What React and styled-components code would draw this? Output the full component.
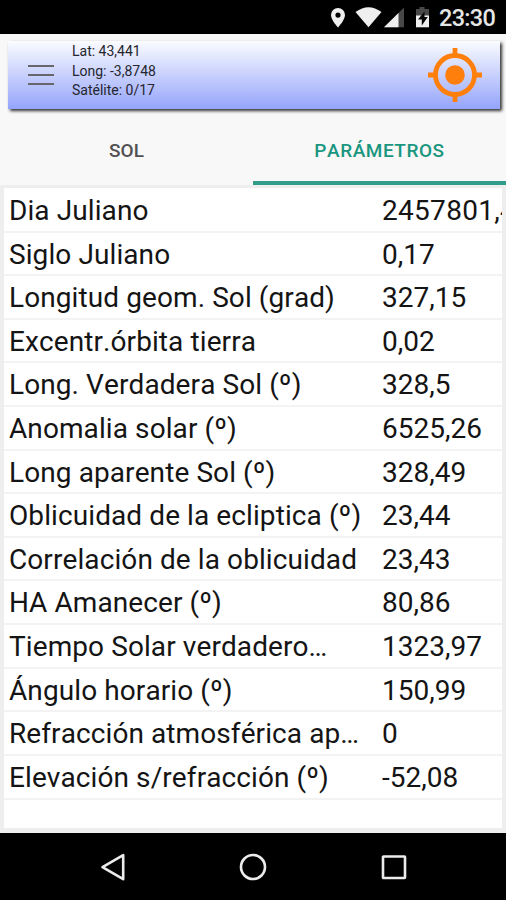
import styled, { createGlobalStyle } from "styled-components";

const parameters = [
	{ label: "Dia Juliano", value: "2457801,4" },
	{ label: "Siglo Juliano", value: "0,17" },
	{ label: "Longitud geom. Sol (grad)", value: "327,15" },
	{ label: "Excentr.órbita tierra", value: "0,02" },
	{ label: "Long. Verdadera Sol (º)", value: "328,5" },
	{ label: "Anomalia solar (º)", value: "6525,26" },
	{ label: "Long aparente Sol (º)", value: "328,49" },
	{ label: "Oblicuidad de la ecliptica (º)", value: "23,44" },
	{ label: "Correlación de la oblicuidad", value: "23,43" },
	{ label: "HA Amanecer (º)", value: "80,86" },
	{ label: "Tiempo Solar verdadero…", value: "1323,97" },
	{ label: "Ángulo horario (º)", value: "150,99" },
	{ label: "Refracción atmosférica ap…", value: "0" },
	{ label: "Elevación s/refracción (º)", value: "-52,08" },
];

function StatusBar() {
	return (
		<StatusBarStyled>
			<svg width="109" height="34" viewBox="0 0 109 34">
				<path
					fill="#efefef"
					fillRule="evenodd"
					d="M8 8a7 7 0 0 0-7 7c0 5 7 12.5 7 12.5S15 20 15 15a7 7 0 0 0-7-7zm0 4.5a2.6 2.6 0 1 1 0 5.2a2.6 2.6 0 0 1 0-5.2z"
				/>
				<path fill="#efefef" d="M25.5 12Q38.5 2.5 51.5 12L38.5 27.2z" />
				<path fill="#484848" d="M74 7.5V27.2H54z" />
				<path fill="#efefef" d="M68.5 13V27.2H54z" />
				<path fill="#484848" d="M86 9h3.5V7h5v2H99v7H86z" />
				<path fill="#efefef" d="M86 15.5h13v11.8H86z" />
				<path fill="#050505" d="M94.5 11.5l-6.5 8h3.8v6l6-8.5h-3.3z" />
			</svg>
			<Clock>23:30</Clock>
		</StatusBarStyled>
	);
}

function Header() {
	return (
		<HeaderStyled>
			<MenuButton aria-label="Menú">
				<span />
				<span />
				<span />
			</MenuButton>
			<Position>
				<p>Lat: 43,441</p>
				<p>Long: -3,8748</p>
				<p>Satélite: 0/17</p>
			</Position>
			<svg width="56" height="56" viewBox="0 0 56 56">
				<g fill="none" stroke="#ff7f0c" strokeWidth="4.8">
					<circle cx="28" cy="28" r="19.5" />
					<path d="M28 1v9M28 46v9M1 28h9M46 28h9" />
				</g>
				<circle cx="28" cy="28" r="9.8" fill="#ff7f0c" />
			</svg>
		</HeaderStyled>
	);
}

function NavigationBar() {
	return (
		<NavigationBarStyled>
			<svg width="28" height="30" viewBox="0 0 28 30">
				<path d="M24.2 3.2v24L3.5 15.2z" />
			</svg>
			<svg width="28" height="30" viewBox="0 0 28 30">
				<circle cx="14" cy="15" r="12" />
			</svg>
			<svg width="28" height="30" viewBox="0 0 28 30">
				<rect x="3" y="4.5" width="22" height="21.5" rx="0.5" />
			</svg>
		</NavigationBarStyled>
	);
}

export default function App() {
	return (
		<Screen>
			<GlobalStyle />
			<StatusBar />
			<Header />
			<Tabs>
				<Tab>SOL</Tab>
				<Tab $active>PARÁMETROS</Tab>
			</Tabs>
			<Table>
				{parameters.map(({ label, value }) => (
					<Row key={label}>
						<Label>{label}</Label>
						<Value $long={value.length > 8}>{value}</Value>
					</Row>
				))}
			</Table>
			<NavigationBar />
		</Screen>
	);
}

const GlobalStyle = createGlobalStyle`
  * {
    box-sizing: border-box;
  }

  body {
    margin: 0;
    font-family: Roboto, "Liberation Sans", sans-serif;
    font-kerning: none;
  }

  p {
    margin: 0;
  }

  svg {
    display: block;
    flex: none;
  }
`;

const Screen = styled.div`
  width: 506px;
  height: 900px;
  display: flex;
  flex-direction: column;
  overflow: hidden;
  background: #f8f8f8;
`;

const StatusBarStyled = styled.div`
  height: 34px;
  flex: none;
  display: flex;
  padding-left: 330px;
  background: #000;
`;

const Clock = styled.span`
  color: #e6e6e6;
  font-size: 23.5px;
  font-weight: 500;
  line-height: 37px;
  letter-spacing: -0.7px;
`;

const HeaderStyled = styled.header`
  height: 68px;
  flex: none;
  margin: 7px 6px 0 8px;
  padding: 0 17px 0 20px;
  display: flex;
  align-items: center;
  background: linear-gradient(#fbfcff, #94a4fb);
  box-shadow: 2px 2px 3px #333;
`;

const MenuButton = styled.button`
  width: 26px;
  margin-right: 18px;
  padding: 0;
  border: 0;
  background: none;
  display: flex;
  flex-direction: column;
  gap: 7px;

  span {
    height: 2px;
    background: #66666c;
  }
`;

const Position = styled.div`
  flex: 1;
  margin-top: -7px;
  color: #25262e;
  font-size: 14px;
  line-height: 19.7px;
`;

const Tabs = styled.nav`
  height: 76px;
  flex: none;
  display: flex;
`;

const Tab = styled.div`
  flex: 1;
  padding-top: 30px;
  text-align: center;
  font-size: 19px;
  font-weight: 500;
  line-height: 24px;
  letter-spacing: ${({ $active }) => ($active ? "0.55px" : "0.1px")};
  color: ${({ $active }) => ($active ? "#1a9680" : "#515151")};
  border-bottom: 4px solid ${({ $active }) => ($active ? "#2f9d8a" : "transparent")};
`;

const Table = styled.div`
  flex: 1;
  padding-top: 1px;
  border: solid #eeeeee;
  border-width: 3px 4px 5px;
  background: #fff;
  overflow: hidden;
`;

const Row = styled.div`
  height: 43.62px;
  padding-left: 5px;
  display: flex;
  border-bottom: 2px solid #f3f3f3;
  color: #141414;
  font-size: 28px;
  line-height: 44px;
  white-space: nowrap;
`;

const Label = styled.span`
  width: 373px;
  flex: none;
  letter-spacing: 0.09px;
`;

const Value = styled.span`
  flex: none;
  letter-spacing: ${({ $long }) => ($long ? "0.3px" : "0")};
`;

const NavigationBarStyled = styled.footer`
  height: 67px;
  flex: none;
  display: flex;
  justify-content: center;
  align-items: center;
  gap: 112.5px;
  background: #000;

  svg {
    fill: none;
    stroke: #ececec;
    stroke-width: 2.6;
    stroke-linejoin: round;
  }
`;
